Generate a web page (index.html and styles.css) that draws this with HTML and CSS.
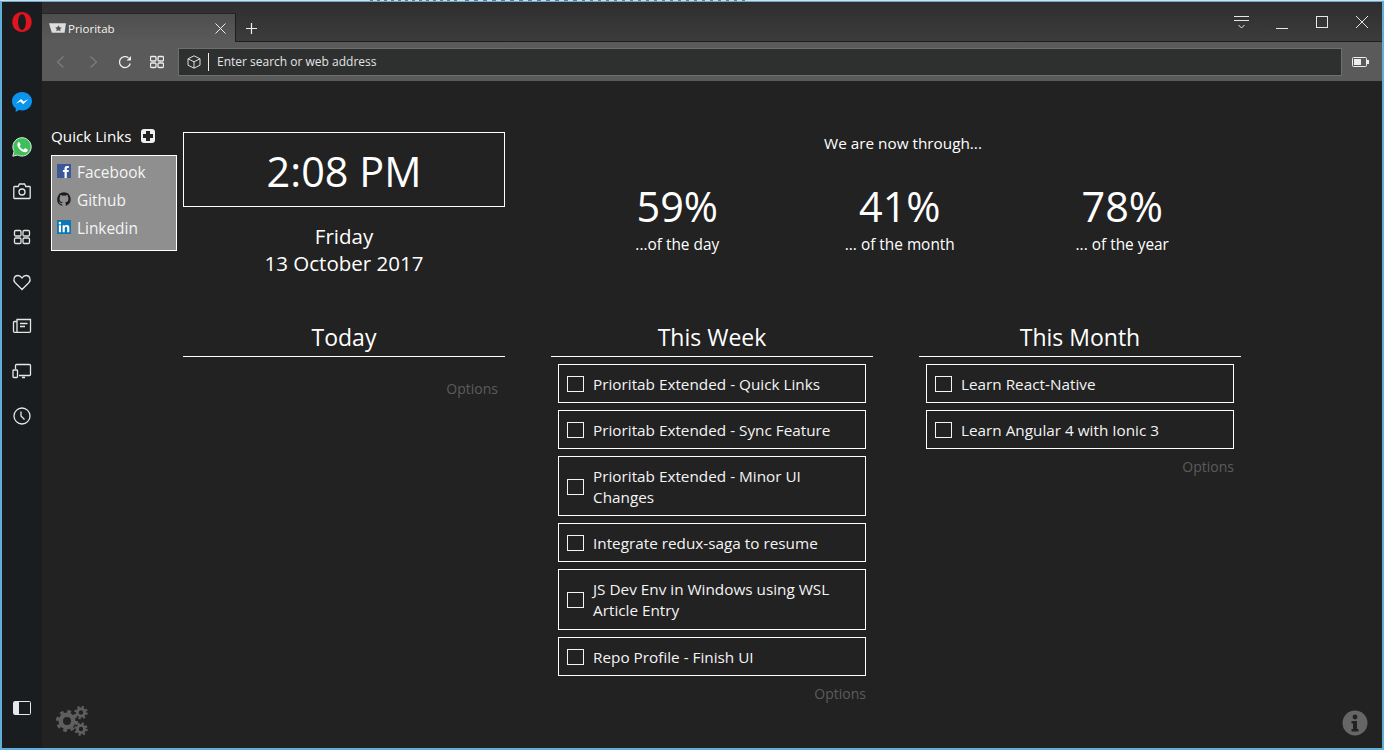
FILE: index.html
```html
<!DOCTYPE html>
<html lang="en">
<head>
    <meta charset="UTF-8">
    <title>Prioritab</title>
    <link rel="stylesheet" href="styles.css">
</head>
<body>
    <div class="desktop-sliver"></div>
    <div class="window">
        <aside class="sidebar">
            <svg class="side-icon opera" viewBox="0 0 20 20"><path fill="#e0141e" fill-rule="evenodd" d="M10 0C4.5 0 .3 4.3.3 10s4.200 10 9.700 10 9.700-4.300 9.700-10S15.500 0 10 0zm0 2.200c2.400 0 3.900 3.300 3.900 7.800s-1.500 7.800-3.900 7.800-3.900-3.300-3.900-7.800 1.500-7.800 3.900-7.800z"/></svg>
            <svg class="side-icon messenger" viewBox="0 0 20 20"><path fill="#0a94ee" d="M10 0C4.500 0 0 4.100 0 9.200c0 2.900 1.400 5.400 3.700 7.100V20l3.400-1.900c.9.300 1.900.4 2.900.4 5.500 0 10-4.200 10-9.300S15.500 0 10 0z"/><path fill="#fff" d="M3.800 11.800 9 6.900l2.700 2.600 4.700-2.600-5.200 5.300-2.700-2.700z"/></svg>
            <svg class="side-icon whatsapp" viewBox="0 0 20 20"><path fill="#3fbf5b" stroke="#d8efdd" stroke-width="1" d="M10 .7a9.200 9.200 0 0 0-7.900 13.800L.8 19.200l4.800-1.200A9.200 9.200 0 1 0 10 .7z"/><path fill="#fff" d="M7 4.900c-.5 0-1.700 1-1.700 2.700 0 3 4.200 7.700 7.900 7.700 1.500 0 2.500-1.200 2.500-2 0-.6-.1-.8-.4-1l-2-1c-.4-.2-.6 0-.8.300l-.6.800c-.2.200-.4.200-.7.100-1.400-.6-2.700-1.800-3.400-3.100-.1-.3 0-.4.100-.6l.5-.7c.2-.2.200-.4.100-.7l-.9-2c-.1-.4-.3-.5-.6-.5z"/></svg>
            <svg class="side-icon line" viewBox="0 1 20 20"><path d="M2.500 5.500h3.700l1.200-2.500h5.200l1.200 2.500h3.700a.7.700 0 0 1 .7.700v10.600a.7.700 0 0 1-.7.700H2.500a.7.700 0 0 1-.7-.7V6.200a.7.700 0 0 1 .7-.7z"/><circle cx="10" cy="11" r="3"/></svg>
            <svg class="side-icon line" viewBox="0 0 20 20"><rect x="2.500" y="3.500" width="6.500" height="5.500" rx="1.200"/><rect x="11" y="3.500" width="6.500" height="5.500" rx="1.200"/><rect x="2.500" y="11" width="6.500" height="5.500" rx="1.200"/><rect x="11" y="11" width="6.500" height="5.500" rx="1.200"/></svg>
            <svg class="side-icon line" viewBox="0 0 20 20"><path d="M10 17.500 3 10.500C.8 8.200 2 3.500 5.800 3.500c2 0 3.300 1.100 4.200 2.500.9-1.400 2.200-2.500 4.200-2.500 3.800 0 5 4.700 2.800 7z"/></svg>
            <svg class="side-icon line" viewBox="0 1 20 20"><path d="M5 5.500V3.500h13.500v11.800a1 1 0 0 1-1 1H2.500a1 1 0 0 1-1-1V6.500a1 1 0 0 1 1-1H5v10.800M8 7.500h7.500M8 10.500h5"/></svg>
            <svg class="side-icon line" viewBox="0 1 20 20"><path d="M3.500 8V4.500a1 1 0 0 1 1-1h13a1 1 0 0 1 1 1v9a1 1 0 0 1-1 1H7M10 16.500h3"/><rect x="1" y="9" width="4.500" height="7.500" rx=".8"/></svg>
            <svg class="side-icon line" viewBox="0 1 20 20"><circle cx="10" cy="10" r="8"/><path d="M9 5.500V10l3.500 3.500"/></svg>
            <svg class="side-icon panel" viewBox="0 0 18 14"><rect x=".5" y=".5" width="17" height="13" rx="1" fill="#1a1d1f" stroke="#e8e8e8"/><path fill="#e8e8e8" d="M1 1h5v12H1z"/></svg>
        </aside>
        <div class="browser">
            <div class="tabstrip">
                <div class="tab">
                    <svg class="tab-icon" viewBox="0 0 18 10"><path fill="#ddd" d="M0 0h18l-1.500 10H3z"/><path fill="#555" d="m10 2 1.200 2.200 2.300.3-1.700 1.600.5 2.400L10 7.300 7.700 8.500l.5-2.400-1.700-1.600 2.300-.3z"/></svg>
                    <span class="tab-title">Prioritab</span>
                    <svg class="tab-close" viewBox="0 0 11 11"><path d="M.5.500l10 10M10.500.500l-10 10"/></svg>
                </div>
                <svg class="new-tab" viewBox="0 0 11 11"><path d="M5.500 0v11M0 5.500h11"/></svg>
                <div class="window-controls">
                    <svg class="win-menu" viewBox="0 0 15 13"><path d="M0 .5h15M0 4.500h15M4.500 9l3 3 3-3"/></svg>
                    <svg class="win-min" viewBox="0 0 12 12"><path d="M0 11.500h12"/></svg>
                    <svg class="win-max" viewBox="0 0 12 12"><rect x=".5" y=".5" width="11" height="11"/></svg>
                    <svg class="win-close" viewBox="0 0 12 12"><path d="M0 0l12 12M12 0 0 12"/></svg>
                </div>
            </div>
            <div class="toolbar">
                <svg class="nav-icon dim" viewBox="0 0 14 14"><path d="M9.500 1.500 3.500 7l6 5.500"/></svg>
                <svg class="nav-icon dim" viewBox="0 0 14 14"><path d="M4.500 1.500 10.500 7l-6 5.500"/></svg>
                <svg class="nav-icon" viewBox="0 0 14 14"><path d="M12.300 8.500A5.500 5.500 0 1 1 10.500 2.800"/><path fill="#eee" stroke="none" d="M13 1v4.500H8.500z"/></svg>
                <svg class="nav-icon" viewBox="0 0 14 14"><rect x=".5" y="1.500" width="5.500" height="4.500" rx="1"/><rect x="8" y="1.500" width="5.500" height="4.500" rx="1"/><rect x=".5" y="8" width="5.500" height="4.500" rx="1"/><rect x="8" y="8" width="5.500" height="4.500" rx="1"/></svg>
                <div class="address">
                    <svg class="address-icon" viewBox="0 0 14 14"><path d="M7 .8 13 3.800v6.400L7 13.200 1 10.200V3.800zM1 3.800l6 3 6-3M7 6.800v6.400"/></svg>
                    <span class="address-text">Enter search or web address</span>
                </div>
                <svg class="battery" viewBox="0 0 18 10"><rect x=".5" y=".5" width="14" height="9" rx="1" fill="none" stroke="#eee"/><path fill="#eee" d="M2 2h7v6H2zM15 3h2v4h-2z"/></svg>
            </div>
            <main class="content">
                <div class="page">
                    <section class="quick-links">
                        <h2 class="quick-title">Quick Links <span class="quick-add"></span></h2>
                        <ul class="quick-list">
                            <li>
                                <svg class="link-icon" viewBox="0 0 13 13"><path fill="#3b5998" d="M0 0h13v13H0z"/><path fill="#fff" d="M7 13V7.500H5.500v-2H7V4.200C7 2.500 8 1.800 9.300 1.800H11v2H9.800c-.5 0-.7.300-.7.700v1H11l-.3 2H9.100V13z"/></svg>
                                Facebook
                            </li>
                            <li>
                                <svg class="link-icon" viewBox="0 0 16 16"><path fill="#1d1d1d" d="M8 .2a8 8 0 0 0-2.500 15.500c.4.100.5-.2.500-.4v-1.400c-2.200.5-2.700-1-2.700-1-.4-.900-.9-1.200-.9-1.200-.7-.5.100-.5.100-.5.800.1 1.200.8 1.200.8.700 1.200 1.900.9 2.300.7.100-.5.300-.9.500-1.100-1.800-.2-3.600-.9-3.600-4 0-.9.300-1.600.8-2.100-.1-.2-.4-1 .1-2.100 0 0 .7-.2 2.200.8a7.500 7.500 0 0 1 4 0c1.500-1 2.200-.8 2.200-.8.400 1.100.2 1.900.1 2.100.5.600.8 1.300.8 2.100 0 3.100-1.900 3.700-3.700 3.900.3.300.6.800.6 1.500v2.200c0 .2.100.5.600.4A8 8 0 0 0 8 .2z"/></svg>
                                Github
                            </li>
                            <li>
                                <svg class="link-icon" viewBox="0 0 15 15"><path fill="#0b78b5" d="M0 0h15v15H0z"/><path fill="#fff" d="M2 5.500h2.300V13H2zM3.100 2a1.300 1.300 0 1 1 0 2.700 1.300 1.300 0 0 1 0-2.700zM6 5.500h2.200v1c.4-.7 1.200-1.200 2.300-1.200 2.200 0 2.700 1.400 2.700 3.300V13h-2.300V9c0-1-.1-1.800-1.100-1.800-1.100 0-1.500.8-1.500 1.800v4H6z"/></svg>
                                Linkedin
                            </li>
                        </ul>
                    </section>
                    <div class="dashboard">
                        <div class="top-row">
                            <div class="clock-col">
                                <div class="clock">2:08 PM</div>
                                <div class="date">Friday<br>13 October 2017</div>
                            </div>
                            <div class="progress">
                                <p class="progress-title">We are now through...</p>
                                <div class="stats">
                                    <div class="stat"><div class="stat-num">59%</div><div class="stat-label">...of the day</div></div>
                                    <div class="stat"><div class="stat-num">41%</div><div class="stat-label">... of the month</div></div>
                                    <div class="stat"><div class="stat-num">78%</div><div class="stat-label">... of the year</div></div>
                                </div>
                            </div>
                        </div>
                        <div class="lists">
                            <section class="list">
                                <h2 class="list-title">Today</h2>
                                <div class="list-body">
                                    <div class="options options-empty">Options</div>
                                </div>
                            </section>
                            <section class="list">
                                <h2 class="list-title">This Week</h2>
                                <div class="list-body">
                                    <div class="task"><span class="check"></span><span class="task-text">Prioritab Extended - Quick Links</span></div>
                                    <div class="task"><span class="check"></span><span class="task-text">Prioritab Extended - Sync Feature</span></div>
                                    <div class="task task-wrap"><span class="check"></span><span class="task-text">Prioritab Extended - Minor UI Changes</span></div>
                                    <div class="task"><span class="check"></span><span class="task-text">Integrate redux-saga to resume</span></div>
                                    <div class="task task-wrap"><span class="check"></span><span class="task-text">JS Dev Env in Windows using WSL Article Entry</span></div>
                                    <div class="task"><span class="check"></span><span class="task-text">Repo Profile - Finish UI</span></div>
                                    <div class="options">Options</div>
                                </div>
                            </section>
                            <section class="list">
                                <h2 class="list-title">This Month</h2>
                                <div class="list-body">
                                    <div class="task"><span class="check"></span><span class="task-text">Learn React-Native</span></div>
                                    <div class="task"><span class="check"></span><span class="task-text">Learn Angular 4 with Ionic 3</span></div>
                                    <div class="options">Options</div>
                                </div>
                            </section>
                        </div>
                    </div>
                </div>
                <footer class="page-footer">
                    <svg class="gears" viewBox="0 0 33 30">
                        <g fill="#5f5f5f" stroke="none">
                            <circle cx="11" cy="15" r="8.500"/>
                            <circle cx="25" cy="6.500" r="5"/>
                            <circle cx="25" cy="23" r="5"/>
                        </g>
                        <g fill="none" stroke="#5f5f5f">
                            <circle cx="11" cy="15" r="9.500" stroke-width="3" stroke-dasharray="3.730 3.730"/>
                            <circle cx="25" cy="6.500" r="5.500" stroke-width="2.500" stroke-dasharray="2.160 2.160"/>
                            <circle cx="25" cy="23" r="5.500" stroke-width="2.500" stroke-dasharray="2.160 2.160"/>
                        </g>
                        <g fill="#222">
                            <circle cx="11" cy="15" r="4"/>
                            <circle cx="25" cy="6.500" r="2.200"/>
                            <circle cx="25" cy="23" r="2.200"/>
                        </g>
                    </svg>
                    <svg class="info" viewBox="0 0 26 26"><circle cx="13" cy="13" r="12.500" fill="#666"/><circle cx="13" cy="7" r="2.400" fill="#222"/><path fill="#222" d="M9.500 11h5.500v8h1.500v2.500h-7V19H11v-5.500H9.500z"/></svg>
                </footer>
            </main>
        </div>
    </div>
</body>
</html>
```

FILE: styles.css
```css
* {
    box-sizing: border-box;
}
html, body {
    height: 100%;
}
body {
    margin: 0;
    background: #dcdcdc;
    font-family: 'Open Sans', 'Noto Sans', sans-serif;
    color: #fff;
    overflow: hidden;
}
h2, p, ul {
    margin: 0;
    padding: 0;
    font-weight: normal;
}
svg {
    display: block;
    flex: none;
}

/* bit of the page behind the window, only its last pixel row shows */
.desktop-sliver {
    height: 1px;
    background:
        repeating-linear-gradient(90deg, #7d7468 0 3px, #dcdcdc 3px 7px) 370px 0 / 90px 1px no-repeat,
        repeating-linear-gradient(90deg, #77708a 0 4px, #dcdcdc 4px 9px) 465px 0 / 120px 1px no-repeat,
        repeating-linear-gradient(90deg, #807a66 0 3px, #dcdcdc 3px 8px) 590px 0 / 160px 1px no-repeat;
}
.window {
    display: flex;
    height: 749px;
    border: 2px solid #62aedb;
    border-top-width: 1px;
    background: #222;
}

/* opera sidebar */
.sidebar {
    width: 40px;
    flex: none;
    display: flex;
    flex-direction: column;
    align-items: center;
    background: #1a1d1f;
    padding-top: 10px;
}
.side-icon {
    width: 20px;
    height: 20px;
    margin-bottom: 25px;
}
.side-icon.opera {
    margin-bottom: 60px;
}
.side-icon.line {
    fill: none;
    stroke: #e6e6e6;
    stroke-width: 1.300;
}
.side-icon.panel {
    width: 18px;
    height: 14px;
    margin: auto 0 33px;
}

/* tabs and address bar */
.browser {
    flex: 1;
    min-width: 0;
    display: flex;
    flex-direction: column;
}
.tabstrip {
    height: 40px;
    flex: none;
    display: flex;
    align-items: flex-start;
    padding-top: 11px;
    background: linear-gradient(#2e2e2e, #3c3c3c);
    border-bottom: 1px solid #1e1e1e;
}
.tab {
    width: 194px;
    height: 29px;
    display: flex;
    align-items: center;
    padding: 0 0 0 7px;
    background: linear-gradient(#4e4e4e, #5a5a5a);
    border-right: 1px solid #1e1e1e;
    border-top: 1px solid #252525;
}
.tab-icon {
    width: 17px;
    height: 10px;
    margin-right: 2px;
}
.tab-title {
    font-size: 11.500px;
    color: #f2f2f2;
}
.tab-close {
    width: 11px;
    height: 11px;
    margin-left: auto;
    margin-right: 9px;
    fill: none;
    stroke: #eee;
}
.new-tab {
    width: 11px;
    height: 11px;
    margin: 10px 0 0 10px;
    fill: none;
    stroke: #eee;
    stroke-width: 1.200;
}
.window-controls {
    margin-left: auto;
    display: flex;
    align-items: flex-start;
    margin-top: 3px;
    padding-right: 14px;
    fill: none;
    stroke: #e6e6e6;
}
.win-menu {
    width: 15px;
    height: 13px;
    margin-right: 27px;
}
.win-min, .win-max, .win-close {
    width: 12px;
    height: 12px;
}
.win-min {
    margin: 1px 28px 0 0;
}
.win-max {
    margin-right: 28px;
}
.toolbar {
    height: 39px;
    flex: none;
    display: flex;
    align-items: center;
    background: #5a5a5a;
    padding: 0 12px 0 12px;
}
.nav-icon {
    width: 14px;
    height: 14px;
    margin-right: 18px;
    fill: none;
    stroke: #eee;
    stroke-width: 1.300;
}
.nav-icon.dim {
    stroke: #7c7c7c;
}
.address {
    flex: 1;
    height: 28px;
    display: flex;
    align-items: center;
    margin: 0 10px 0 -4px;
    padding-left: 8px;
    background: #2e3030;
    border: 1px solid #6e6e6e;
}
.address-icon {
    width: 14px;
    height: 14px;
    fill: none;
    stroke: #ddd;
}
.address-text {
    margin-left: 7px;
    padding-left: 8px;
    border-left: 1px solid #eee;
    font-size: 12px;
    line-height: 18px;
    color: #e4e4e4;
}
.battery {
    width: 18px;
    height: 10px;
}

/* prioritab page */
.content {
    flex: 1;
    min-height: 0;
    display: flex;
    flex-direction: column;
    justify-content: space-between;
    background: #222;
}
.page {
    display: flex;
    padding: 51px 0 0 9px;
}
.quick-links {
    width: 132px;
    flex: none;
}
.quick-title {
    display: flex;
    align-items: center;
    gap: 10px;
    height: 28px;
    margin: -10px 0 5px;
    font-size: 15.200px;
}
.quick-add {
    width: 14px;
    height: 14px;
    border-radius: 3px;
    background:
        linear-gradient(#222, #222) center / 10px 4px no-repeat,
        linear-gradient(#222, #222) center / 4px 10px no-repeat,
        #eee;
}
.quick-list {
    list-style: none;
    width: 126px;
    height: 96px;
    padding-top: 2px;
    background: #8f8f8f;
    border: 1px solid #fff;
}
.quick-list li {
    height: 28px;
    display: flex;
    align-items: center;
    gap: 6px;
    padding-left: 5px;
    font-size: 15.400px;
    color: #f4f4f4;
}
.link-icon {
    width: 14px;
    height: 14px;
    margin-top: -2px;
}
.dashboard {
    width: 1072px;
    flex: none;
}
.top-row {
    display: flex;
    gap: 46px;
    height: 195px;
}
.clock-col {
    width: 322px;
    flex: none;
    text-align: center;
}
.clock {
    height: 75px;
    border: 1px solid #fff;
    font-size: 41.400px;
    line-height: 76px;
}
.date {
    margin-top: 16px;
    font-size: 20.500px;
    line-height: 27px;
}
.progress {
    width: 704px;
    flex: none;
    text-align: center;
}
.progress-title {
    font-size: 15.300px;
    line-height: 22px;
}
.stats {
    display: flex;
    margin-top: 26px;
    padding-left: 15px;
}
.stat {
    width: 222.500px;
}
.stat-num {
    font-size: 41.400px;
    line-height: 53px;
}
.stat-label {
    font-size: 15.400px;
    line-height: 24px;
}
.lists {
    display: flex;
    gap: 46px;
}
.list {
    width: 322px;
    flex: none;
}
.list-title {
    height: 30px;
    border-bottom: 1px solid #fff;
    font-size: 23px;
    line-height: 20px;
    text-align: center;
}
.list-body {
    display: flex;
    flex-direction: column;
    gap: 7px;
    padding: 7px 7px 0;
}
.task {
    min-height: 39px;
    display: flex;
    align-items: center;
    gap: 9px;
    padding: 8px 8px 7px;
    border: 1px solid #fff;
    font-size: 15.300px;
    line-height: 21px;
    color: #f4f4f4;
}
.task-text {
    padding-top: 1px;
}
.task-wrap {
    padding-bottom: 7.300px;
}
.check {
    width: 17px;
    height: 16px;
    flex: none;
    border: 1px solid #f4f4f4;
}
.options {
    margin-top: -1px;
    text-align: right;
    font-size: 14px;
    line-height: 24px;
    color: #5c5c5c;
}
.options-empty {
    margin-top: 13px;
}
.page-footer {
    display: flex;
    justify-content: space-between;
    align-items: flex-end;
    padding: 0 14px 13px 14px;
}
.gears {
    width: 33px;
    height: 30px;
}
.info {
    width: 26px;
    height: 26px;
}
```
